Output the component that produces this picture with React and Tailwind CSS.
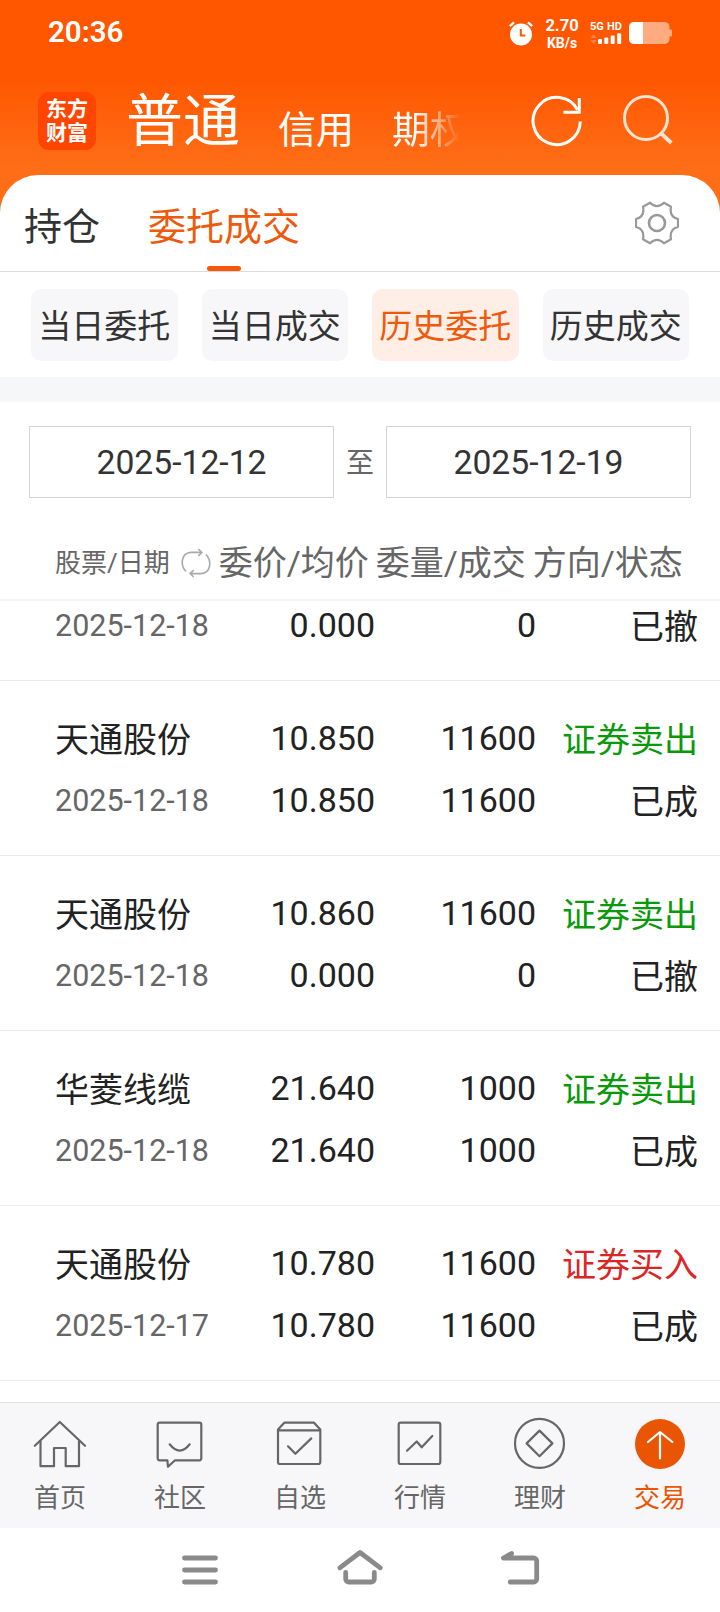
import React, { useState } from 'react';

const orders = [
  { date: '2025-12-18', price: '10.900', avg: '0.000', qty: '11600', filled: '0', side: 'sell', status: '已撤', partial: true },
  { name: '天通股份', date: '2025-12-18', price: '10.850', avg: '10.850', qty: '11600', filled: '11600', side: 'sell', status: '已成' },
  { name: '天通股份', date: '2025-12-18', price: '10.860', avg: '0.000', qty: '11600', filled: '0', side: 'sell', status: '已撤' },
  { name: '华菱线缆', date: '2025-12-18', price: '21.640', avg: '21.640', qty: '1000', filled: '1000', side: 'sell', status: '已成' },
  { name: '天通股份', date: '2025-12-17', price: '10.780', avg: '10.780', qty: '11600', filled: '11600', side: 'buy', status: '已成' },
];

const filters = ['当日委托', '当日成交', '历史委托', '历史成交'];

const navItems = [
  {
    label: '首页',
    icon: (
      <>
        <path d="M1.8 28.8 26.8 5 52 28.8" />
        <path d="M7.5 24v25.2H21V31h11.7v18.2H46V24" />
      </>
    ),
  },
  {
    label: '社区',
    icon: (
      <>
        <path d="M14.4 43.3H6.7a2 2 0 0 1-2-2V7.7a2 2 0 0 1 2-2h39.6a2 2 0 0 1 2 2v33.6a2 2 0 0 1-2 2H22L15 49.8Z" />
        <path d="M16.7 27.3Q26.7 40 36.7 27.3" />
      </>
    ),
  },
  {
    label: '自选',
    icon: (
      <>
        <path d="M5 12.6 11.3 5.7H41l6.3 6.9V45a2 2 0 0 1-2 2H7a2 2 0 0 1-2-2ZM5 13.4h42.3" />
        <path d="m15 29.3 7.4 7.5 15.9-15.4" />
      </>
    ),
  },
  {
    label: '行情',
    icon: (
      <>
        <rect x="5.7" y="5.7" width="41.6" height="41.3" rx="2" />
        <path d="m14 33.7 9.7-9.2 5 5.8L39.3 19" />
      </>
    ),
  },
  {
    label: '理财',
    icon: (
      <>
        <circle cx="26.5" cy="26.4" r="24.5" />
        <path d="m26.5 13.6 12.9 12.8-12.9 12.8-12.9-12.8Z" />
      </>
    ),
  },
  {
    label: '交易',
    active: true,
    icon: (
      <>
        <circle cx="27" cy="27" r="25" fill="#ea5504" stroke="none" />
        <path d="M27 41.3V15M15 25l12-10 12.4 10" stroke="#fff" />
      </>
    ),
  },
];

function StatusBar() {
  return (
    <div className="flex h-[66px] items-center pl-12 pr-[48px] text-white">
      <span className="text-[29.5px] leading-none font-semibold">20:36</span>
      <svg className="ml-auto" width="26" height="26" viewBox="0 0 26 26">
        <circle cx="13" cy="14.5" r="11" fill="#fff" />
        <path d="M1.8 6.2 6 2.4M24.2 6.2 20 2.4" stroke="#fff" strokeWidth="2.4" />
        <path d="M12.8 9v6.6h4.6" stroke="#ff5a00" strokeWidth="2" fill="none" />
      </svg>
      <div className="ml-[11px] w-[34px] text-center font-bold">
        <div className="mt-px text-[16.5px] leading-[18px]">2.70</div>
        <div className="text-[14px] leading-[16px]">KB/s</div>
      </div>
      <div className="ml-[11px] w-8">
        <div className="flex justify-between text-[11px] leading-[12px] font-bold">
          <span>5G</span>
          <span>HD</span>
        </div>
        <svg width="32" height="12" viewBox="0 0 32 12" fill="#fff">
          <path d="M.5 5 3.5 1l3 4ZM.5 7h6l-3 4Z" opacity=".25" />
          <rect x="8" y="6" width="4" height="5" rx="1" />
          <rect x="14.3" y="4.500" width="4" height="6.5" rx="1" />
          <rect x="20.7" y="2.500" width="4" height="8.5" rx="1" />
          <rect x="27.2" y=".3" width="4" height="10.7" rx="1" />
        </svg>
      </div>
      <svg className="ml-[7px]" width="43" height="24" viewBox="0 0 43 24">
        <rect x="0" y="1" width="40.5" height="22" rx="5" fill="#ffab80" />
        <rect x="40" y="8.5" width="3" height="7" rx="1.2" fill="#ffab80" />
        <path d="M5 1h9v22H5a5 5 0 0 1-5-5V6a5 5 0 0 1 5-5Z" fill="#fff" />
      </svg>
    </div>
  );
}

function Header() {
  return (
    <div className="flex h-[109px] items-start pl-[38px] text-white">
      <div className="mt-[26px] flex size-[58px] flex-col items-center justify-center rounded-[11px] bg-[#ff4500] text-[21px] leading-6 font-bold">
        <span>东方</span>
        <span>财富</span>
      </div>
      <div className="mt-[27px] ml-[30px] text-[57px] leading-[58px]">普通</div>
      <div className="mt-11 ml-[38px] text-[38px] leading-[40px]">信用</div>
      <div className="mt-11 ml-[38px] w-[76px] bg-linear-to-r from-white from-30% to-transparent to-90% bg-clip-text text-[38px] leading-[40px] text-transparent">
        期权
      </div>
      <svg className="mt-7 ml-[62px]" width="54" height="54" viewBox="0 0 54 54" fill="none" stroke="#fff" strokeWidth="3">
        <path d="M50.3 27.5A23.6 23.6 0 1 1 47.6 16" />
        <path d="M49.3 4v14.2H33.5" />
      </svg>
      <svg className="mt-7 ml-[38px]" width="54" height="54" viewBox="0 0 54 54" fill="none" stroke="#ffe3d3" strokeWidth="3">
        <circle cx="24" cy="24" r="21.5" />
        <path d="m39.3 39.5 10 9.500" strokeWidth="3.8" />
      </svg>
    </div>
  );
}

function Tabs() {
  return (
    <div className="flex h-[97px] items-start border-b border-[#dcdcdc] pl-6 pr-[41px] text-[38px] leading-[40px]">
      <span className="mt-8 text-[#333]">持仓</span>
      <div className="ml-12 flex flex-col items-center">
        <span className="mt-8 text-[#ee5a0c]">委托成交</span>
        <span className="mt-[19px] h-[5px] w-[34px] rounded-full bg-[#f8570a]" />
      </div>
      <svg className="mt-[26px] ml-auto" width="44" height="44" viewBox="-22 -22 44 44" fill="none" stroke="#999" strokeWidth="2.2">
        <path d="M-7-20.3Q0-13.5 7-20.3L14-16.3Q12-6 21-4V4Q12 6 14 16.3L7 20.3Q0 13.5-7 20.3L-14 16.3Q-12 6-21 4V-4Q-12-6-14-16.3Z" strokeLinejoin="round" />
        <circle r="8" strokeWidth="2.6" />
      </svg>
    </div>
  );
}

function OrderRow({ order }) {
  return (
    <div className={`flex flex-col gap-5 border-b border-[#ebebeb] pl-[55px] pr-[22px] text-[34px] leading-[42px] text-[#222] ${order.partial ? 'h-[80px] pt-1' : 'h-[175px] pt-[37px]'}`}>
      {!order.partial && (
        <div className="grid h-[42px] grid-cols-[160px_160px_161px_162px]">
          <span className="mt-px">{order.name}</span>
          <span className="-mt-px text-right">{order.price}</span>
          <span className="-mt-px text-right">{order.qty}</span>
          <span className={`mt-px text-right ${order.side === 'buy' ? 'text-[#dc2626]' : 'text-[#0a990a]'}`}>
            {order.side === 'buy' ? '证券买入' : '证券卖出'}
          </span>
        </div>
      )}
      <div className="grid h-[42px] grid-cols-[160px_160px_161px_162px]">
        <span className="text-[30.5px] text-[#666]">{order.date}</span>
        <span className="-mt-px text-right">{order.avg}</span>
        <span className="-mt-px text-right">{order.filled}</span>
        <span className="mt-px text-right">{order.status}</span>
      </div>
    </div>
  );
}

export default function App() {
  const [filter, setFilter] = useState('历史委托');

  return (
    <div className="flex h-[1612px] w-[720px] flex-col overflow-hidden bg-white font-['Roboto','Noto_Sans_CJK_SC',sans-serif]">
      <div className="bg-[linear-gradient(to_bottom,#ff5600_0px,#ff5600_75px,#ff6d17_165px,#ff6d17_212px)]">
        <StatusBar />
        <Header />
        <div className="rounded-t-[38px] bg-white">
          <Tabs />
        </div>
      </div>

      <div className="grid h-[105px] grid-cols-4 gap-6 px-[31px] pt-[17px]">
        {filters.map((item) => (
          <button
            key={item}
            onClick={() => setFilter(item)}
            className={`h-[72px] rounded-[10px] pt-[3px] text-[33px] leading-none whitespace-nowrap ${
              item === filter ? 'bg-[#ffeee6] text-[#ee5a0c]' : 'bg-[#f7f7f9] text-[#333]'
            }`}
          >
            {item}
          </button>
        ))}
      </div>
      <div className="h-[25px] bg-[#f6f7f9]" />

      <div className="flex h-[120px] items-start px-[29px] pt-6 text-[#333]">
        <div className="flex h-[72px] w-[305px] items-center justify-center border border-[#d5d5d5] pt-0.5 text-[33.7px]">2025-12-12</div>
        <div className="flex h-[72px] flex-1 items-center justify-center pt-1 text-[28px] text-[#666]">至</div>
        <div className="flex h-[72px] w-[305px] items-center justify-center border border-[#d5d5d5] pt-0.5 text-[33.7px]">2025-12-19</div>
      </div>

      <div className="flex h-[79px] items-center border-b-2 border-[#f5f5f5] pt-[5px] pl-[55px] text-[34px] text-[#666]">
        <span className="text-[26px]">股票/日期</span>
        <svg className="ml-[11px]" width="30" height="30" viewBox="0 0 30 30" fill="none" stroke="#aaa" strokeWidth="1.6">
          <path d="M5 23.5C-1 17 0 5 10 4.4H20.8M17.3 1l3.6 3.4-3.6 3.4" />
          <path d="M25 6.5C31 13 30 25 20 25.6H9.2M12.7 29l-3.6-3.4 3.6-3.4" />
        </svg>
        <span className="ml-2">委价/均价</span>
        <span className="ml-[7px]">委量/成交</span>
        <span className="ml-[7px]">方向/状态</span>
      </div>

      <div className="flex-1 overflow-hidden">
        {orders.map((order, idx) => (
          <OrderRow key={idx} order={order} />
        ))}
      </div>

      <nav className="grid h-[126px] grid-cols-6 border-t border-[#e2e2e4] bg-[#f7f7f9]">
        {navItems.map((item) => (
          <div key={item.label} className={`flex flex-col items-center pt-3.5 text-[26px] leading-[30px] ${item.active ? 'text-[#ea5504]' : 'text-[#666]'}`}>
            <svg width="54" height="54" viewBox="0 0 54 54" fill="none" stroke="#666" strokeWidth="2.2" strokeLinecap="round" strokeLinejoin="round">
              {item.icon}
            </svg>
            <span className="mt-3">{item.label}</span>
          </div>
        ))}
      </nav>

      {/* Android navigation keys */}
      <div className="flex h-[84px] items-center justify-center">
        <svg width="480" height="84" viewBox="120 1528 480 84" fill="none" stroke="#8a8a8a" strokeWidth="4.800" strokeLinecap="round" strokeLinejoin="round">
          <path d="M184.5 1558h31M184.5 1570h31M184.5 1582h31" />
          <path d="M339.8 1567.8 360 1552.5l20.3 15.3M345.7 1572.5v6.5a3 3 0 0 0 3 3h22.6a3 3 0 0 0 3-3v-6.5" />
          <path d="m511.5 1553.5-8 4.5h30.200a3 3 0 0 1 3 3v18a3 3 0 0 1-3 3h-23.500" />
        </svg>
      </div>
    </div>
  );
}
